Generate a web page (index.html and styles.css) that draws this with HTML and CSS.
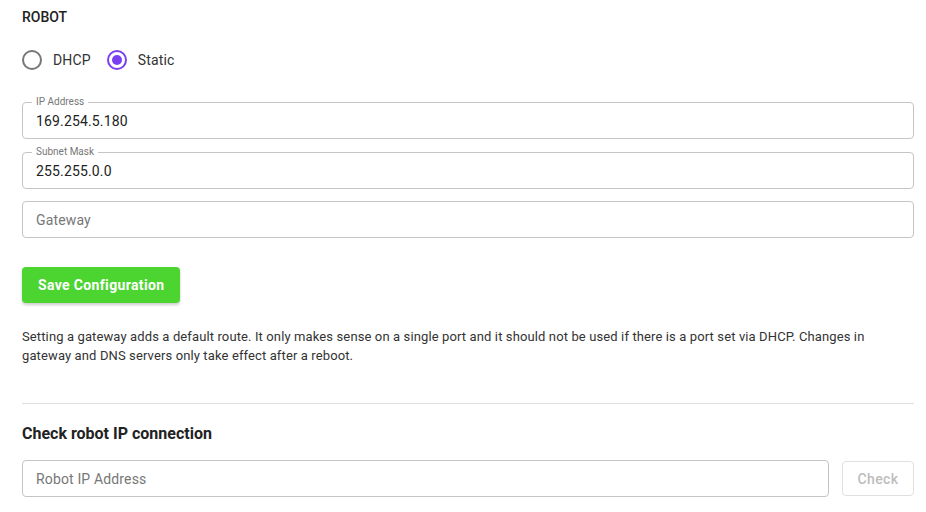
FILE: index.html
```html
<!DOCTYPE html>
<html>
<head>
<meta charset="utf-8">
<link rel="stylesheet" href="styles.css">
</head>
<body>
<div class="page">
  <div class="section-title">ROBOT</div>
  <div class="radio-row">
    <label class="radio"><span class="radio-circle"></span><span class="radio-text">DHCP</span></label>
    <label class="radio checked"><span class="radio-circle"><span class="radio-dot"></span></span><span class="radio-text">Static</span></label>
  </div>
  <div class="fields">
    <div class="field">
      <span class="field-label">IP Address</span>
      <span class="field-value">169.254.5.180</span>
    </div>
    <div class="field">
      <span class="field-label">Subnet Mask</span>
      <span class="field-value">255.255.0.0</span>
    </div>
    <div class="field">
      <span class="field-placeholder">Gateway</span>
    </div>
  </div>
  <button class="btn-save">Save Configuration</button>
  <p class="note">Setting a gateway adds a default route. It only makes sense on a single port and it should not be used if there is a port set via DHCP. Changes in gateway and DNS servers only take effect after a reboot.</p>
  <hr class="divider">
  <h2 class="check-title">Check robot IP connection</h2>
  <div class="check-row">
    <div class="field check-field"><span class="field-placeholder">Robot IP Address</span></div>
    <button class="btn-check">Check</button>
  </div>
</div>
</body>
</html>
```

FILE: styles.css
```css
* { box-sizing: border-box; }
html, body { margin: 0; padding: 0; background: #fff; }
body {
  font-family: Roboto, "Liberation Sans", Arial, sans-serif;
  color: #222;
}
.page {
  padding: 8px 12px 0 22px;
}
.section-title {
  font-size: 14px;
  font-weight: 500;
  line-height: 18px;
  color: #222;
}
.radio-row {
  display: flex;
  align-items: center;
  gap: 16px;
  margin-top: 22px;
  height: 24px;
}
.radio {
  display: flex;
  align-items: center;
  gap: 11px;
  font-size: 14px;
  letter-spacing: 0.15px;
  color: #333;
}
.radio-circle {
  width: 20px;
  height: 20px;
  border: 2px solid #777;
  border-radius: 50%;
  display: flex;
  align-items: center;
  justify-content: center;
}
.radio.checked .radio-circle { border-color: #7a3ff0; }
.radio-dot {
  width: 10px;
  height: 10px;
  border-radius: 50%;
  background: #7a3ff0;
}
.fields {
  display: flex;
  flex-direction: column;
  gap: 12.5px;
  margin-top: 30px;
}
.field {
  position: relative;
  height: 37px;
  border: 1px solid #c4c4c4;
  border-radius: 4px;
  display: flex;
  align-items: center;
  padding-left: 13px;
  font-size: 14px;
  letter-spacing: 0.15px;
}
.field-label {
  position: absolute;
  top: -7px;
  left: 9px;
  padding: 0 4px;
  background: #fff;
  font-size: 10px;
  line-height: 12px;
  letter-spacing: 0;
  color: #777;
}
.field-value { color: #222; padding-top: 1px; }
.field-placeholder { color: #777; }
.btn-save {
  display: block;
  margin-top: 29px;
  height: 36px;
  padding: 0 16px;
  background: #4cd431;
  color: #fff;
  border: none;
  border-radius: 4px;
  font-family: inherit;
  font-size: 14px;
  font-weight: 700;
  letter-spacing: 0.35px;
  box-shadow: 0 2px 3px rgba(0,0,0,0.2);
}
.note {
  margin: 24px 0 0 0;
  font-size: 13px;
  line-height: 19px;
  letter-spacing: 0.12px;
  color: #333;
}
.divider {
  margin: 38px 0 0 0;
  border: none;
  border-top: 1px solid #e0e0e0;
  height: 0;
}
.check-title {
  margin: 20px 0 0 0;
  font-size: 16px;
  font-weight: 700;
  line-height: 20px;
  color: #222;
}
.check-row {
  display: flex;
  align-items: center;
  gap: 13px;
  margin-top: 16px;
}
.check-field {
  flex: 1;
  height: 37px;
}
.btn-check {
  width: 72px;
  height: 35px;
  background: #fff;
  border: 1px solid #e0e0e0;
  border-radius: 4px;
  font-family: inherit;
  font-size: 14px;
  font-weight: 500;
  letter-spacing: 0.4px;
  color: #bdbdbd;
}
```
